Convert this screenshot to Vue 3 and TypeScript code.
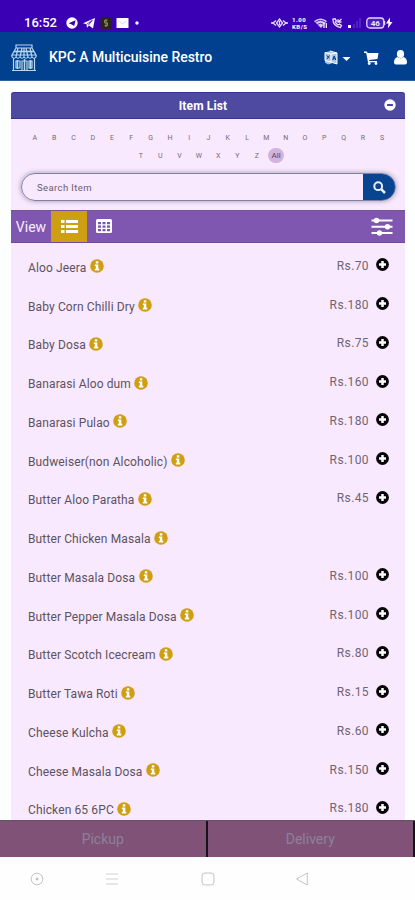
<script setup lang="ts">
interface MenuItem {
  name: string
  price: number | null
}

const letters: string[] = [...'ABCDEFGHIJKLMNOPQRSTUVWXYZ', 'All']

const items: MenuItem[] = [
  { name: 'Aloo Jeera', price: 70 },
  { name: 'Baby Corn Chilli Dry', price: 180 },
  { name: 'Baby Dosa', price: 75 },
  { name: 'Banarasi Aloo dum', price: 160 },
  { name: 'Banarasi Pulao', price: 180 },
  { name: 'Budweiser(non Alcoholic)', price: 100 },
  { name: 'Butter Aloo Paratha', price: 45 },
  { name: 'Butter Chicken Masala', price: null },
  { name: 'Butter Masala Dosa', price: 100 },
  { name: 'Butter Pepper Masala Dosa', price: 100 },
  { name: 'Butter Scotch Icecream', price: 80 },
  { name: 'Butter Tawa Roti', price: 15 },
  { name: 'Cheese Kulcha', price: 60 },
  { name: 'Cheese Masala Dosa', price: 150 },
  { name: 'Chicken 65 6PC', price: 180 },
]
</script>

<template>
  <div class="screen">
    <div class="status">
      <span class="clock">16:52</span>
      <svg class="tray" width="76" height="14" viewBox="0 0 76 14">
        <circle cx="6" cy="7" r="5.7" fill="#fff" />
        <path d="M2.6 7.2 9.6 4.3 8.2 10 5.8 8.5z" fill="#3a00b4" />
        <path d="M17 7.2 29 2l-2 10.500-4-3-2 2.300-.500-3.500z" fill="#fff" />
        <path d="m20.800 8.200 5.500-3.800-4 4.800" stroke="#3a00b4" fill="none" stroke-width=".8" />
        <rect x="34.500" y="1" width="11" height="12" rx="2" fill="#29231f" />
        <path d="M41.500 4.300h-3v2.600h3v2.800h-3M40 3v8" stroke="#918a62" fill="none" />
        <rect x="50.500" y="2" width="12" height="10" rx=".5" fill="#fff" />
        <path d="m52.500 5 4 3 4-3" stroke="#cfc7ee" fill="none" stroke-width=".8" />
        <circle cx="71" cy="7" r="1.700" fill="#fff" />
      </svg>
      <div class="signals">
        <svg width="17" height="12" viewBox="0 0 17 12" fill="none" stroke="#e6dcff" stroke-width="1.300">
          <path d="m5 3.500-3 2.500 3 2.500M12 3.500 15 6l-3 2.500M8.500 2 11.500 6l-3 4-3-4z" />
          <path d="M0 6h3M14 6h3M8.500 4v4" />
        </svg>
        <span class="rate"><b>1.00</b><b>KB/S</b></span>
        <svg width="14" height="12" viewBox="0 0 14 12">
          <path d="M0 4Q6.500-1 13 4L7 11z" fill="#d9ccfa" />
          <path d="M1.500 5.200q5-3.500 10 0M3.500 7.300q3-2 6 0" stroke="#4d20b9" fill="none" />
          <path d="M10 6v5M12.300 6v5" stroke="#fff" stroke-width="1.200" />
        </svg>
        <svg width="11" height="12" viewBox="0 0 11 12" fill="none" stroke="#e6dcff" stroke-width="1.300">
          <path d="M1 2q-.5 7 7.500 8.500l1-2-2-1.500-1.500 1Q4 6.500 3.300 5L4.500 4 3 1.800zM6 5l3.500-3M6 2.200V5h3.500" />
        </svg>
        <svg width="15" height="12" viewBox="0 0 15 12">
          <rect x="1" y="8" width="3" height="3" fill="#fff" />
          <path d="M7 11V7M10 11V4M13 11V1" stroke="#5222c2" stroke-width="2" />
        </svg>
        <svg class="battery" width="27" height="12" viewBox="0 0 27 12">
          <rect x=".8" y="1" width="17" height="10" rx="3" fill="#4b21bd" stroke="#e2d8ff" stroke-width="1.300" />
          <path d="M18.500 4v4" stroke="#e2d8ff" stroke-width="1.500" />
          <text x="9.300" y="8.700" text-anchor="middle" font-size="8" font-weight="700" fill="#ece5ff">46</text>
          <path d="m24 .5-4 6h2.500l-.7 5 4.700-6.500H24z" fill="#fff" />
        </svg>
      </div>
    </div>

    <header class="appbar">
      <svg class="shop" width="26" height="28" viewBox="0 0 26 28" fill="none" stroke="#b9d6ef" stroke-width="1.200">
        <path d="M5 4V1h16v3M5 4h16l4 7H1zM1 11v2q2 2.500 4 0 2 2.500 4 0 2 2.500 4 0 2 2.500 4 0 2 2.500 4 0 2 2.500 4 0v-2M7 4l-2 9M11 4l-2 9M13 4v9M15 4l2 9M19 4l2 9M2.500 14.500v12h21v-12M1 26.500h24" />
        <path d="M5 17h4v7H5zM11 17h5v9.500h-5zM18 17h3v7h-3z" />
        <path d="M6.500 16v9M13.500 15v11M19.500 16v9" stroke-width="1.500" />
        <path d="M3 7.500h20" stroke-width="1.600" />
      </svg>
      <h1>KPC A Multicuisine Restro</h1>
      <div class="actions">
        <svg width="26" height="16" viewBox="0 0 26 16">
          <path d="M1 2.500 6 1l7 2v11l-4-1-5 1.500-3-2z" fill="#a9c4e4" />
          <path d="M1 2.500 7 4v8l-6-1.500zM7 4l6-1v11l-6-2M6 1l7 2" stroke="#fff" fill="none" />
          <path d="M2.500 5.500 5.500 8M5.500 5.500 3 9M8.700 10l1.500-4 1.500 4M9 8.700h2.400" stroke="#00408e" fill="none" />
          <path d="M18.500 7h8l-4 4z" fill="#fff" />
        </svg>
        <svg width="15" height="14" viewBox="0 0 15 14">
          <path d="M0 .500h3l.5 1.500H14.500l-1 6-8.500 1 .3 1H13v1.200H4L2.200 1.900H0z" fill="#fff" />
          <circle cx="5.200" cy="12.500" r="1.400" fill="#fff" /><circle cx="12" cy="12.500" r="1.400" fill="#fff" />
        </svg>
        <svg width="13" height="15" viewBox="0 0 13 15" fill="#fff">
          <ellipse cx="6.500" cy="4" rx="3.600" ry="4" />
          <path d="M3.500 7q3 2.500 6 0Q13 8 13 12.500q0 2-2 2H2q-2 0-2-2Q0 8 3.500 7z" />
        </svg>
      </div>
    </header>

    <main>
      <section class="panel">
        <div class="panel-title">
          <span>Item List</span>
          <svg class="minus" width="12" height="12" viewBox="0 0 12 12">
            <circle cx="6" cy="6" r="5.700" fill="#fff" /><rect x="3" y="5" width="6" height="2" rx=".5" fill="#4a45a0" />
          </svg>
        </div>
        <nav class="letters">
          <span v-for="l in letters" :key="l" :class="{ chosen: l === 'All' }">{{ l }}</span>
        </nav>
        <div class="search">
          <span>Search Item</span>
          <button aria-label="Search">
            <svg width="13" height="13" viewBox="0 0 13 13" fill="none" stroke="#e9efff" stroke-width="2">
              <circle cx="5.200" cy="5.200" r="3.900" /><path d="m8.200 8.200 3.800 3.800" stroke-width="2.500" />
            </svg>
          </button>
        </div>
        <div class="toolbar">
          <span class="view">View</span>
          <div class="mode">
            <svg width="17" height="13" viewBox="0 0 17 13" fill="#fff">
              <path d="M0 0h3.500v3H0zM0 5h3.500v3H0zM0 10h3.500v3H0zM5 0h12v3H5zM5 5h12v3H5zM5 10h12v3H5z" />
            </svg>
          </div>
          <svg class="grid" width="16" height="14" viewBox="0 0 16 14">
            <rect width="16" height="14" rx="1.500" fill="#fff" />
            <path d="M2 3h3v2.300H2zM6.500 3h3v2.300h-3zM11 3h3v2.300h-3zM2 6.500h3v2.300H2zM6.500 6.500h3v2.300h-3zM11 6.500h3v2.300h-3zM2 10h3v2.300H2zM6.500 10h3v2.300h-3zM11 10h3v2.300h-3z" fill="#7d55ae" />
          </svg>
          <svg class="sliders" width="22" height="19" viewBox="0 0 22 19">
            <path d="M.5 3.500h21M.5 9.700h21M.5 16h21" stroke="#fff" stroke-width="2" />
            <g fill="#fff"><circle cx="5.500" cy="3.500" r="2.700" /><circle cx="16.500" cy="9.700" r="2.700" /><circle cx="8.500" cy="16" r="2.700" /></g>
          </svg>
        </div>
        <ul class="items">
          <li v-for="item in items" :key="item.name">
            <span class="name">{{ item.name }}</span>
            <svg class="info" width="14" height="14" viewBox="0 0 14 14">
              <circle cx="7" cy="7" r="6.800" fill="#cf9f11" />
              <path d="M5.800 2.200h2.500v2.200H5.800zM4.800 5.500h3.500v4.300h1v1.600H4.800V9.800h1V7.100h-1z" fill="#fff" />
            </svg>
            <template v-if="item.price !== null">
              <span class="price">Rs.{{ item.price }}</span>
              <svg class="add" width="13" height="13" viewBox="0 0 13 13">
                <circle cx="6.500" cy="6.500" r="6.400" fill="#080508" />
                <path d="M6.500 3v7M3 6.500h7" stroke="#fff" stroke-width="2.500" />
              </svg>
            </template>
          </li>
        </ul>
      </section>
    </main>

    <div class="order">
      <button>Pickup</button>
      <button>Delivery</button>
    </div>
    <div class="sysnav">
      <svg width="14" height="14" viewBox="0 0 14 14" fill="none" stroke="#c4c4c4"><circle cx="7" cy="7" r="5.800" /><circle cx="7" cy="7" r="1" fill="#999" /></svg>
      <svg width="14" height="14" viewBox="0 0 14 14" stroke="#d0d0d0" stroke-width="1.200"><path d="M1 2h12M1 7h12M1 12h12" /></svg>
      <svg width="14" height="14" viewBox="0 0 14 14" fill="none" stroke="#c4c4c4"><rect x="1" y="1" width="12" height="12" rx="3" /></svg>
      <svg width="14" height="14" viewBox="0 0 14 14" fill="none" stroke="#c4c4c4"><path d="M12.300 1v12L1.500 7z" stroke-linejoin="round" /></svg>
    </div>
  </div>
</template>

<style scoped>
.screen {
  width: 415px;
  height: 900px;
  display: flex;
  flex-direction: column;
  overflow: hidden;
  background: #fdfffe;
  font-family: Roboto, sans-serif;
}
svg { flex: none; display: block; }
button { border: 0; padding: 0; font-family: inherit; }
.status {
  height: 32px;
  flex: none;
  box-sizing: border-box;
  padding: 13px 22px 0 24px;
  display: flex;
  align-items: center;
  background: #3a00b4;
  color: #fff;
}
.clock { width: 42px; font-size: 13px; font-weight: 500; line-height: 16px; }
.signals { margin-left: auto; display: flex; align-items: center; gap: 4px; }
.rate { width: 18px; display: grid; font-size: 6px; line-height: 7px; letter-spacing: 0.5px; color: #f0eaff; }
.rate b { height: 7px; overflow: hidden; font-weight: 900; }
.appbar {
  height: 49px;
  flex: none;
  box-sizing: border-box;
  padding: 3px 8px 0 11px;
  display: flex;
  align-items: center;
  background: #00408e;
  border-bottom: 1px solid #36609b;
  color: #fff;
}
h1 { margin: -2px 0 0 12px; font-size: 14px; font-weight: 500; line-height: 20px; letter-spacing: -0.04px; }
.actions { margin-left: auto; display: flex; align-items: center; gap: 13px; }
.actions svg:first-child { margin-right: 1px; }
.actions svg:last-child { margin-left: 2px; }
main { flex: 1; min-height: 0; overflow: hidden; padding: 11px 10px 0 11px; }
.panel { background: #f9e9fe; }
.panel-title {
  height: 27px;
  box-sizing: border-box;
  padding: 0 9px 0 0;
  display: flex;
  align-items: center;
  background: #4e4aa1;
  border-top: 1px solid #37338f;
  border-bottom: 1px solid #37338f;
  border-radius: 3px 3px 0 0;
  color: #fff;
  font-size: 12px;
  font-weight: 700;
  letter-spacing: 0.15px;
}
.panel-title span { flex: 1; padding-left: 11px; text-align: center; }
.panel-title .minus { margin-top: -2px; }
.letters {
  padding: 11px 13px 0 14px;
  display: flex;
  flex-wrap: wrap;
  justify-content: center;
  row-gap: 2px;
  color: #74677b;
  font-size: 7px;
}
.letters span { width: 15.3px; height: 15.5px; margin: 0 2px; line-height: 16px; text-align: center; border-radius: 50%; }
.letters .chosen { background: #d3b2dc; color: #59435f; font-size: 8px; }
.search {
  height: 28px;
  margin: 10px 9px 0 10px;
  box-sizing: border-box;
  display: flex;
  align-items: center;
  overflow: hidden;
  border: 1px solid #7e83a5;
  border-radius: 14px;
  box-shadow: 0 0 5px #9990aa;
  color: #685b70;
  font-size: 9.5px;
}
.search span { flex: 1; padding-left: 15px; letter-spacing: 0.4px; }
.search button { width: 32px; height: 28px; display: grid; place-items: center; background: #08448f; }
.toolbar {
  height: 33px;
  margin-top: 9px;
  box-sizing: border-box;
  padding-right: 12px;
  display: flex;
  align-items: center;
  background: #7f57b1;
  border-top: 1px solid #775596;
  border-bottom: 1px solid #694f9a;
}
.view { width: 40px; text-align: center; color: #f8edff; font-size: 14px; }
.mode { width: 36px; height: 31px; display: grid; place-items: center; background: #cf9f13; }
.grid { margin: -1px 0 0 9px; }
.sliders { margin-left: auto; }
.items { margin: 0; padding: 4.6px 16px 0 17px; list-style: none; }
.items li { height: 38.75px; display: flex; align-items: center; color: #5c5260; font-size: 12px; }
.name { position: relative; top: 1px; letter-spacing: 0.12px; white-space: nowrap; }
.info { margin: -1px 0 0 3.5px; }
.price { margin-left: auto; margin-top: -2px; letter-spacing: 0.4px; color: #706474; }
.add { margin: -4px 0 0 7px; }
.order { height: 37px; flex: none; display: flex; background: #815278; border-top: 1px solid #675168; box-sizing: border-box; }
.order button {
  flex: 1;
  background: transparent;
  border-right: 2px solid #171318;
  color: #898398;
  font-size: 14px;
}
.sysnav { height: 43px; flex: none; padding-left: 30px; display: flex; align-items: center; background: #fefefe; }
.sysnav svg:nth-child(2) { margin-left: 61px; }
.sysnav svg:nth-child(3) { margin-left: 82px; }
.sysnav svg:nth-child(4) { margin-left: 80px; }
</style>
